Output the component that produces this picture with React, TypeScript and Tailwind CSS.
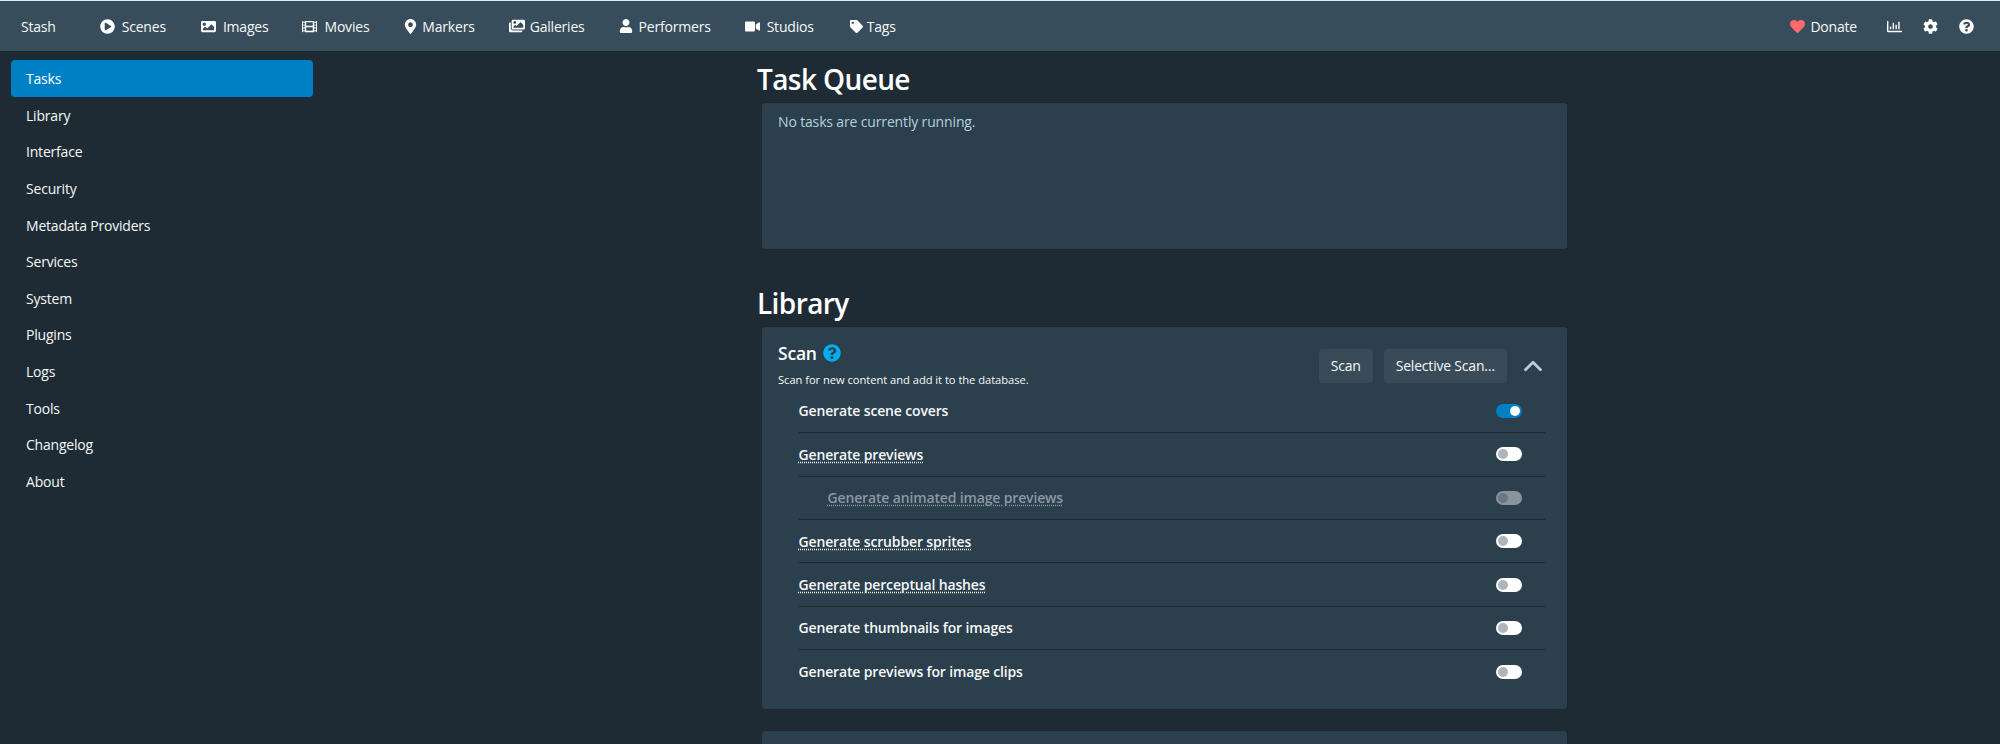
import React from "react";
import {
  FaPlayCircle,
  FaImage,
  FaFilm,
  FaMapMarkerAlt,
  FaImages,
  FaUser,
  FaVideo,
  FaTag,
  FaHeart,
  FaRegChartBar,
  FaCog,
  FaQuestionCircle,
} from "react-icons/fa";
import { ChevronUp } from "lucide-react";

const navItems = [
  { label: "Scenes", icon: FaPlayCircle, size: 15, cls: "gap-[7px] mr-[35px]" },
  { label: "Images", icon: FaImage, size: 15, cls: "gap-[7px] mr-[34px]" },
  { label: "Movies", icon: FaFilm, size: 15, cls: "gap-[7px] mr-[34px]" },
  { label: "Markers", icon: FaMapMarkerAlt, size: 15, cls: "gap-[4px] mr-[34px]" },
  { label: "Galleries", icon: FaImages, size: 16, cls: "gap-[5px] mr-[34px]" },
  { label: "Performers", icon: FaUser, size: 14, cls: "gap-[6px] mr-[34px]" },
  { label: "Studios", icon: FaVideo, size: 15, cls: "gap-[7px] mr-[36px]" },
  { label: "Tags", icon: FaTag, size: 13, cls: "gap-[4px]" },
];

const sideItems = [
  "Tasks",
  "Library",
  "Interface",
  "Security",
  "Metadata Providers",
  "Services",
  "System",
  "Plugins",
  "Logs",
  "Tools",
  "Changelog",
  "About",
];

const scanOptions = [
  { label: "Generate scene covers", on: true },
  { label: "Generate previews", tip: true },
  { label: "Generate animated image previews", tip: true, disabled: true },
  { label: "Generate scrubber sprites", tip: true },
  { label: "Generate perceptual hashes", tip: true },
  { label: "Generate thumbnails for images" },
  { label: "Generate previews for image clips" },
];

function Toggle({ on, disabled }: { on?: boolean; disabled?: boolean }) {
  if (on) {
    return (
      <span className="flex h-[14px] w-[26px] items-center justify-end rounded-full bg-[#0080c4] pr-[2px]">
        <span className="h-[10px] w-[10px] rounded-full bg-white" />
      </span>
    );
  }
  return (
    <span
      className={`flex h-[14px] w-[26px] items-center rounded-full pl-[2px] ${
        disabled ? "bg-[#8a949d]" : "bg-white"
      }`}
    >
      <span
        className={`h-[10px] w-[10px] rounded-full ${
          disabled ? "bg-[#6b7782]" : "bg-[#adb5bd]"
        }`}
      />
    </span>
  );
}

function OptionRow({
  label,
  on,
  tip,
  disabled,
  last,
}: {
  label: string;
  on?: boolean;
  tip?: boolean;
  disabled?: boolean;
  last?: boolean;
}) {
  return (
    <div
      className={`flex h-[43.4px] items-center justify-between pr-[23px] ${
        last ? "" : "border-b border-[#1c2730]"
      } ${disabled ? "pl-[29px]" : ""}`}
    >
      <span
        className={`text-[14px] font-semibold tracking-[-0.15px] ${
          disabled ? "text-[#8b98a3]" : "text-[#f5f8fa]"
        } ${tip ? "underline decoration-dotted underline-offset-2" : ""}`}
      >
        {label}
      </span>
      <Toggle on={on} disabled={disabled} />
    </div>
  );
}

export default function App() {
  return (
    <div className="h-screen overflow-hidden bg-[#1e2b34] font-['Open_Sans',sans-serif] text-[14px] tracking-[-0.2px] text-[#f5f8fa]">
      <div className="h-px bg-[#e8ebed]" />
      <nav className="flex h-[50px] items-center justify-between bg-[#384d5b] pl-[21px] pr-[26px] shadow-[0_1px_0_#1c2730]">
        <div className="flex items-center">
          <span className="mr-[44px]">Stash</span>
          <div className="flex items-center">
            {navItems.map((item) => (
              <a key={item.label} className={`flex items-center ${item.cls}`}>
                <item.icon size={item.size} className="text-white" />
                <span>{item.label}</span>
              </a>
            ))}
          </div>
        </div>
        <div className="flex items-center">
          <FaHeart className="text-[15px] text-[#ff6b6b]" />
          <span className="ml-[5px] mr-[30px]">Donate</span>
          <FaRegChartBar className="mr-[21px] text-[15px] text-white" />
          <FaCog className="mr-[21px] text-[15px] text-white" />
          <FaQuestionCircle className="text-[15px] text-white" />
        </div>
      </nav>

      <div className="flex">
        <aside className="ml-[11px] mt-[9px] w-[302px] shrink-0">
          {sideItems.map((item, i) => (
            <div
              key={item}
              className={`flex h-[36.6px] items-center rounded px-[15px] ${
                i === 0 ? "bg-[#0080c4] text-white" : "pt-px text-[#f5f8fa]"
              }`}
            >
              {item}
            </div>
          ))}
        </aside>

        <main className="ml-[444px] w-[811px] shrink-0">
          <h1 className="mt-[11px] text-[28px] font-semibold leading-[34px] tracking-[-0.6px] text-white">Task Queue</h1>
          <div className="ml-[4px] mt-[6px] h-[148px] rounded border border-[#1c2730] bg-[#2b3f4c] px-[16px] py-[8px] tracking-[-0.15px] text-[#b5d0df]">
            No tasks are currently running.
          </div>

          <h1 className="mt-[36px] text-[28px] font-semibold leading-[34px] tracking-[-0.6px] text-white">Library</h1>
          <div className="ml-[4px] mt-[6px] h-[384px] rounded border border-[#1c2730] bg-[#2b3f4c] px-[16px] pt-[13px]">
            <div className="flex items-center justify-between">
              <div>
                <div className="flex items-center gap-[6px]">
                  <span className="text-[17.5px] font-semibold leading-[26px] text-white">Scan</span>
                  <FaQuestionCircle className="text-[18px] text-[#00aeef]" />
                </div>
                <div className="mt-[6px] text-[11.2px] tracking-[-0.05px] text-[#f5f8fa]">
                  Scan for new content and add it to the database.
                </div>
              </div>
              <div className="mt-[3px] flex items-center">
                <button className="h-[34px] rounded bg-[#394b59] px-[12px] text-[#f5f8fa]">Scan</button>
                <button className="ml-[11px] h-[34px] rounded bg-[#394b59] px-[12px] text-[#f5f8fa]">
                  Selective Scan…
                </button>
                <ChevronUp size={30} strokeWidth={2.25} className="ml-[11px] mr-[3px] text-[#bfccd6]" />
              </div>
            </div>
            <div className="ml-[20.5px] mt-[1px] pr-[6px]">
              {scanOptions.map((opt, i) => (
                <OptionRow key={opt.label} {...opt} last={i === scanOptions.length - 1} />
              ))}
            </div>
          </div>
          <div className="ml-[4px] mt-[20px] h-[60px] rounded border border-[#1c2730] bg-[#2b3f4c]" />
        </main>
      </div>
    </div>
  );
}
